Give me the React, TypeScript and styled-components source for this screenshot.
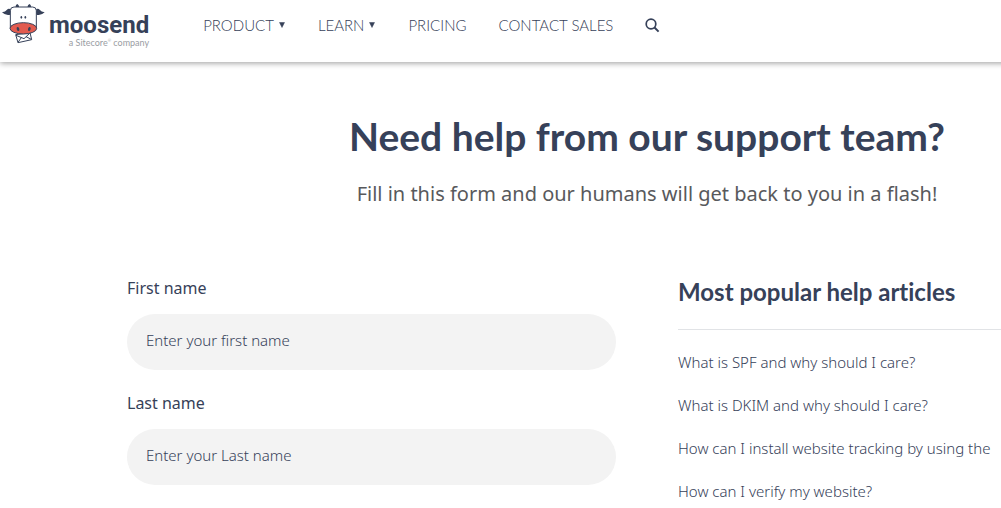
import React from "react";
import styled, { createGlobalStyle } from "styled-components";

const ink = "#364159";

const GlobalStyle = createGlobalStyle`
  *, *::before, *::after { box-sizing: border-box; }
  body {
    margin: 0;
    background: #fff;
    color: ${ink};
    font-family: "Noto Sans", "Open Sans", sans-serif;
  }
`;

const Viewport = styled.div`
  overflow-x: clip;
`;

const Page = styled.div`
  min-width: 1294px;
`;

const Header = styled.header`
  display: flex;
  align-items: flex-start;
  gap: 54px;
  height: 62px;
  background: #fff;
  box-shadow: 0 1px 6px rgba(0, 0, 0, 0.4);
`;

const Logo = styled.a`
  display: flex;
  gap: 4px;
  color: ${ink};
  text-decoration: none;
`;

const Wordmark = styled.span`
  display: flex;
  flex-direction: column;
  align-items: flex-end;
  padding-top: 12px;
`;

const Brand = styled.span`
  font: 700 24px/26px Roboto, sans-serif;
`;

const Tagline = styled.span`
  font-family: Lato, sans-serif;
  font-size: 9px;
  line-height: 10px;
  color: #9a9da3;

  sup {
    font-size: 4px;
    line-height: 1;
  }
`;

const Nav = styled.nav`
  display: flex;
  align-items: center;
  gap: 32px;
  height: 50px;
`;

const NavLink = styled.a`
  display: flex;
  align-items: center;
  gap: 4px;
  color: ${ink};
  font-family: Lato, sans-serif;
  font-size: 15px;
  font-weight: 300;
  line-height: 20px;
  text-decoration: none;
`;

const SearchButton = styled.button`
  display: flex;
  padding: 0;
  border: 0;
  background: none;
  color: ${ink};
  cursor: pointer;
`;

const Main = styled.main`
  max-width: 1040px;
  margin: 0 auto;
  padding-top: 50px;
`;

const Intro = styled.div`
  text-align: center;
`;

const Title = styled.h1`
  margin: 0 0 16px;
  font-family: Lato, sans-serif;
  font-size: 39px;
  font-weight: 700;
  line-height: 48px;
`;

const Lead = styled.p`
  margin: 0;
  color: #58595c;
  font-size: 20px;
  line-height: 36px;
`;

const Columns = styled.div`
  display: grid;
  grid-template-columns: 1fr 1fr;
  gap: 62px;
  margin-top: 63px;
`;

const Form = styled.form`
  display: flex;
  flex-direction: column;
  gap: 20px;
`;

const Field = styled.div`
  display: flex;
  flex-direction: column;
  gap: 13px;
`;

const Label = styled.label`
  font-size: 16px;
  font-weight: 450;
  line-height: 26px;
`;

const TextInput = styled.input`
  width: 100%;
  height: 56px;
  padding: 0 19px 4px;
  border: 0;
  border-radius: 28px;
  background: #f3f3f3;
  color: ${ink};
  font-family: inherit;
  font-size: 15px;
  font-weight: 350;

  &::placeholder {
    color: ${ink};
    opacity: 1;
  }
`;

const ArticlesTitle = styled.h2`
  margin: 0;
  padding-bottom: 20px;
  border-bottom: 1px solid #e1e3e6;
  font-family: Lato, sans-serif;
  font-size: 24px;
  font-weight: 700;
  line-height: 34px;
  font-variant-ligatures: none;
`;

const ArticleList = styled.ul`
  display: flex;
  flex-direction: column;
  gap: 19px;
  margin: 20px 0 0;
  padding: 0;
  list-style: none;
`;

const ArticleLink = styled.a`
  display: block;
  color: ${ink};
  font-size: 15px;
  font-weight: 350;
  line-height: 24px;
  text-decoration: none;
`;

const CowIcon = () => (
  <svg width="45" height="45" viewBox="0 0 135 135" aria-hidden="true">
    <path d="M46 23 Q47 13 52 12 Q57 14 58 23Z M82 23 Q83 14 88 12 Q93 13 94 23Z" fill={ink} />
    <path d="M6 37 Q16 36 21 29 Q26 24 34 29 L31 44 Q17 48 6 37Z M134 37 Q124 36 119 29 Q114 24 106 29 L109 44 Q123 48 134 37Z" fill={ink} />
    <path d="M47 104 L90 98 L95 119 L54 128Z" fill="#fff" stroke={ink} strokeWidth="3" strokeLinejoin="round" />
    <path d="M48 106 L72 116 L89 100 M54 127 L64 113 M94 118 L78 110" fill="none" stroke={ink} strokeWidth="3" />
    <path d="M31 84 V32 Q31 21 42 21 H98 Q109 21 109 32 V84Z" fill="#fff" stroke={ink} strokeWidth="3" />
    <ellipse cx="70" cy="85" rx="40" ry="17" fill="#e25b4f" stroke={ink} strokeWidth="3" />
    <ellipse cx="64" cy="52" rx="2.5" ry="4" fill={ink} />
    <ellipse cx="76" cy="52" rx="2.5" ry="4" fill={ink} />
    <ellipse cx="54" cy="87" rx="4" ry="6" fill={ink} transform="rotate(-15 54 87)" />
    <ellipse cx="88" cy="87" rx="4" ry="6" fill={ink} transform="rotate(15 88 87)" />
  </svg>
);

const Caret = () => (
  <svg width="8" height="8" viewBox="0 0 8 8" aria-hidden="true">
    <path d="M1.5 1.5H6.5L4 6.5Z" fill={ink} stroke={ink} strokeWidth="0.5" />
  </svg>
);

const SearchIcon = () => (
  <svg width="15" height="15" viewBox="0 0 15 15" fill="none" stroke="currentColor" aria-hidden="true">
    <circle cx="6" cy="6" r="4.8" strokeWidth="1.7" />
    <path d="M9.5 9.5L13.6 13.6" strokeWidth="2" />
  </svg>
);

const navItems = [
  { label: "PRODUCT", menu: true },
  { label: "LEARN", menu: true },
  { label: "PRICING", menu: false },
  { label: "CONTACT SALES", menu: false },
];

const fields = [
  { id: "first-name", label: "First name", placeholder: "Enter your first name" },
  { id: "last-name", label: "Last name", placeholder: "Enter your Last name" },
];

const articles = [
  "What is SPF and why should I care?",
  "What is DKIM and why should I care?",
  "How can I install website tracking by using the",
  "How can I verify my website?",
];

export default function App() {
  return (
    <Viewport>
      <GlobalStyle />
      <Page>
        <Header>
          <Logo href="#">
            <CowIcon />
            <Wordmark>
              <Brand>moosend</Brand>
              <Tagline>a Sitecore<sup>®</sup> company</Tagline>
            </Wordmark>
          </Logo>
          <Nav>
            {navItems.map((item) => (
              <NavLink key={item.label} href="#">
                {item.label}
                {item.menu && <Caret />}
              </NavLink>
            ))}
            <SearchButton type="button" aria-label="Search">
              <SearchIcon />
            </SearchButton>
          </Nav>
        </Header>
        <Main>
          <Intro>
            <Title>Need help from our support team?</Title>
            <Lead>Fill in this form and our humans will get back to you in a flash!</Lead>
          </Intro>
          <Columns>
            <Form>
              {fields.map((field) => (
                <Field key={field.id}>
                  <Label htmlFor={field.id}>{field.label}</Label>
                  <TextInput id={field.id} type="text" placeholder={field.placeholder} />
                </Field>
              ))}
            </Form>
            <aside>
              <ArticlesTitle>Most popular help articles</ArticlesTitle>
              <ArticleList>
                {articles.map((article) => (
                  <li key={article}>
                    <ArticleLink href="#">{article}</ArticleLink>
                  </li>
                ))}
              </ArticleList>
            </aside>
          </Columns>
        </Main>
      </Page>
    </Viewport>
  );
}
